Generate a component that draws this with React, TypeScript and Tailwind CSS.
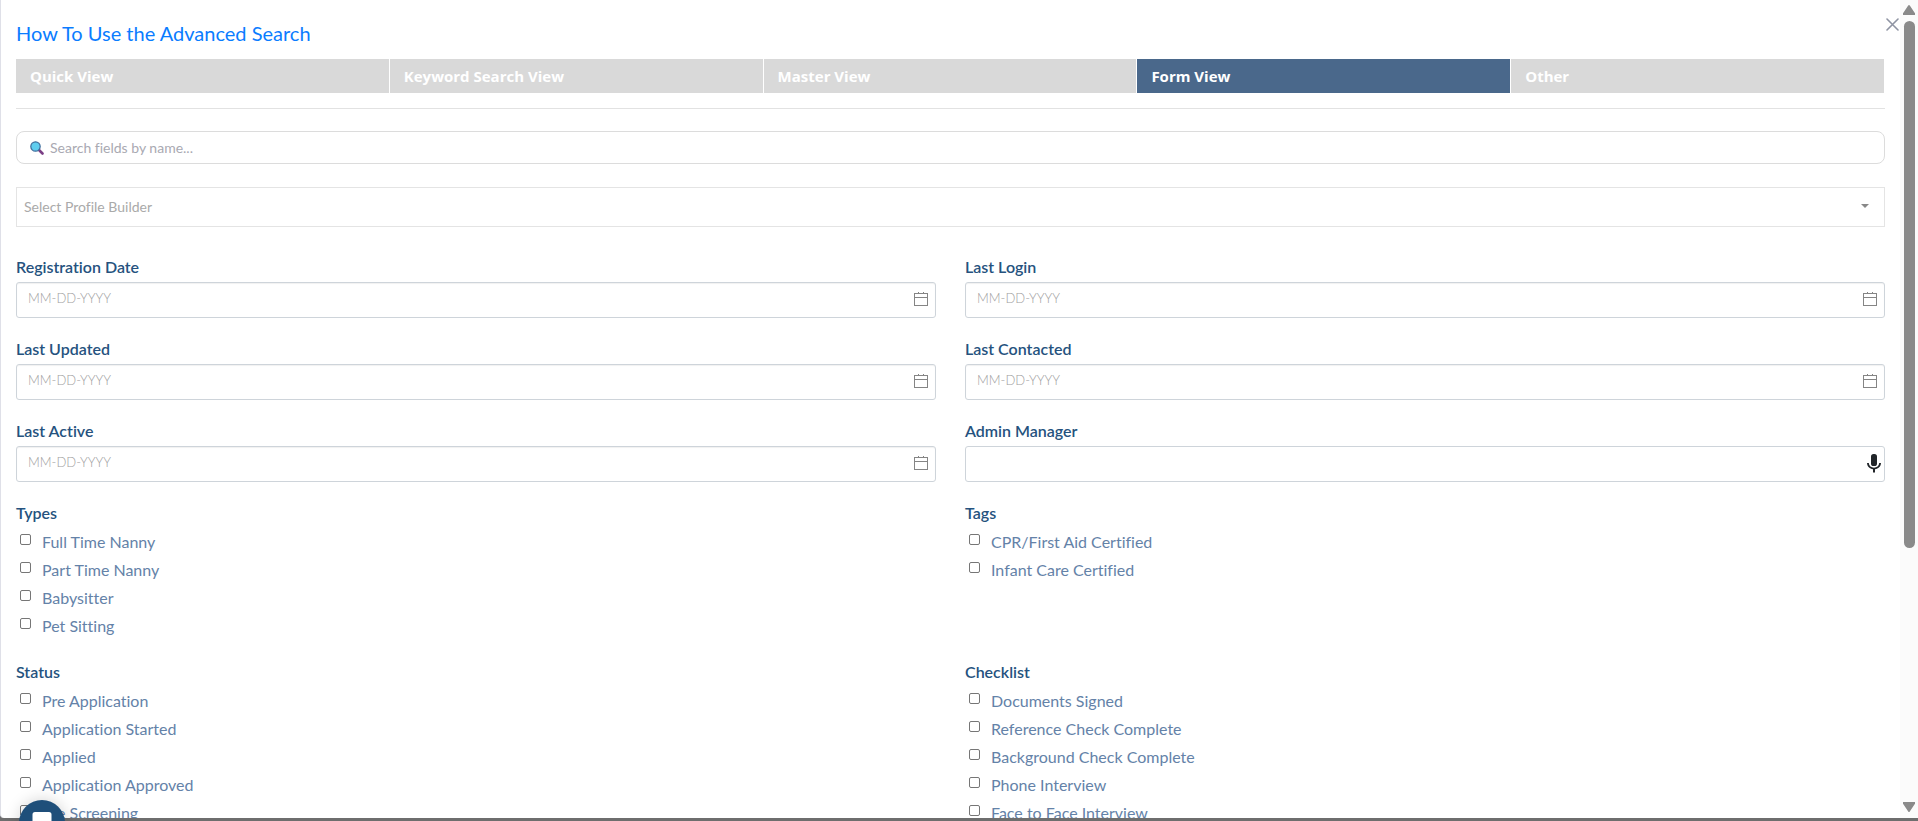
import React, { useState } from 'react';

const TABS = ['Quick View', 'Keyword Search View', 'Master View', 'Form View', 'Other'];

const DATE_FIELDS = ['Registration Date', 'Last Login', 'Last Updated', 'Last Contacted', 'Last Active'];

const GROUPS = [
  { title: 'Types', items: ['Full Time Nanny', 'Part Time Nanny', 'Babysitter', 'Pet Sitting'] },
  { title: 'Tags', items: ['CPR/First Aid Certified', 'Infant Care Certified'] },
  {
    title: 'Status',
    items: ['Pre Application', 'Application Started', 'Applied', 'Application Approved', 'Pre Screening'],
  },
  {
    title: 'Checklist',
    items: [
      'Documents Signed',
      'Reference Check Complete',
      'Background Check Complete',
      'Phone Interview',
      'Face to Face Interview',
    ],
  },
];

const toId = (name: string) => name.toLowerCase().replace(/[^a-z]+/g, '-');

const CalendarIcon = () => (
  <svg className="w-4 h-4" viewBox="0 0 16 16" fill="none" stroke="#858585" shapeRendering="crispEdges">
    <path d="M1.5 2.5h13v12h-13z" />
    <path d="M1.5 6.5h13" />
    <path d="M5.5 1v2M10.5 1v2" />
  </svg>
);

const MicIcon = () => (
  <svg className="w-6 h-6" viewBox="0 0 24 24" fill="#212529">
    <rect x="9" y="2" width="6" height="12" rx="2.6" />
    <path d="M5 11h1.8c.2 2.900 2.400 4.700 5.200 4.700s5-1.800 5.200-4.700H19c-.2 3.500-2.700 5.800-6 6.200V20.500h-2v-3.300c-3.300-.4-5.800-2.700-6-6.200z" />
  </svg>
);

const MagnifierIcon = () => (
  <svg className="w-[14px] h-[14px] shrink-0" viewBox="0 0 14 14">
    <path d="M8.500 8.500l4 4" stroke="#7b3f86" strokeWidth="2.600" strokeLinecap="round" />
    <circle cx="5.500" cy="5.500" r="4.700" fill="#5fcdee" stroke="#3f6d9c" strokeWidth="1.200" />
  </svg>
);

const DateField = ({ label }: { label: string }) => (
  <div>
    <label htmlFor={toId(label)} className="block text-[16px] leading-6 font-semibold text-[#25527e]">
      {label}
    </label>
    <div className="mt-[3px] flex h-9 items-center rounded-[3px] border border-[#ced4da] pb-[2px] pl-[11px] pr-[6px] shadow-[inset_0_1px_1px_rgba(0,0,0,0.06)]">
      <input
        id={toId(label)}
        type="text"
        placeholder="MM-DD-YYYY"
        className="min-w-0 flex-1 bg-transparent text-[13px] font-light outline-none placeholder:text-[#a0a0a0]"
      />
      <button type="button" aria-label={`Pick ${label}`}>
        <CalendarIcon />
      </button>
    </div>
  </div>
);

const CheckboxGroup = ({ title, items }: { title: string; items: string[] }) => (
  <fieldset className="pb-px">
    <legend className="mb-[3px] text-[16px] leading-6 font-semibold text-[#25527e]">{title}</legend>
    {items.map((item) => (
      <label key={item} className="flex h-7 items-start pl-1 text-[16px] leading-7 text-[#6482a8]">
        <input
          type="checkbox"
          className="mt-[6px] mr-[11px] h-[11px] w-[11px] shrink-0 appearance-none rounded-[2px] border border-[#767676] bg-white checked:bg-[#4a6789]"
        />
        {item}
      </label>
    ))}
  </fieldset>
);

const App: React.FC = () => {
  const [activeTab, setActiveTab] = useState('Form View');

  return (
    <div className="relative flex h-screen flex-col overflow-hidden bg-[#6e6e6e] pb-[3px] font-['Lato',sans-serif] [font-variant-ligatures:none]">
      <div className="flex min-h-0 flex-1 overflow-hidden rounded-bl-[4px] border-l border-[#dfe0e8] bg-white">
        <main className="min-w-0 flex-1 overflow-hidden pt-[19px] pr-[15px] pl-[15px]">
          <a href="#help" className="block w-fit text-[20px] leading-7 text-[#0a7cff]">
            How To Use the Advanced Search
          </a>

          <nav className="mt-3 mr-px grid grid-cols-5 gap-px">
            {TABS.map((tab) => (
              <button
                key={tab}
                type="button"
                onClick={() => setActiveTab(tab)}
                className={`h-[34px] px-[14px] text-left font-['Open_Sans',sans-serif] text-[15px] font-bold text-white ${
                  tab === activeTab ? 'bg-[#4a688b]' : 'bg-[#d9d9d9]'
                }`}
              >
                {tab}
              </button>
            ))}
          </nav>

          <hr className="mt-[15px] border-[#e2e2e2]" />

          <div className="mt-[22px] flex h-[33px] items-center gap-[6px] rounded-[8px] border border-[#dcdcdc] px-[13px]">
            <MagnifierIcon />
            <input
              type="text"
              aria-label="Search fields by name"
              placeholder="Search fields by name..."
              className="min-w-0 flex-1 bg-transparent text-[14px] outline-none placeholder:text-[#a9a9b2]"
            />
          </div>

          <div className="relative mt-[23px]">
            <select
              aria-label="Select Profile Builder"
              defaultValue=""
              className="h-10 w-full appearance-none border border-[#e4e4e4] bg-white px-[7px] pb-[2px] text-[14px] text-[#aaaaaa] outline-none"
            >
              <option value="">Select Profile Builder</option>
            </select>
            <svg className="pointer-events-none absolute top-[17px] right-4 h-1 w-2" viewBox="0 0 8 4" fill="#888888">
              <path d="M0 0h8L4 4z" />
            </svg>
          </div>

          <form className="mt-7 grid grid-cols-2 gap-x-[29px] gap-y-[19px]">
            {DATE_FIELDS.map((label) => (
              <DateField key={label} label={label} />
            ))}
            <div>
              <label htmlFor="admin-manager" className="block text-[16px] leading-6 font-semibold text-[#25527e]">
                Admin Manager
              </label>
              <div className="mt-[3px] flex h-9 items-center rounded-[3px] border border-[#ced4da] pl-[11px]">
                <input
                  id="admin-manager"
                  type="text"
                  className="min-w-0 flex-1 bg-transparent text-[13px] outline-none"
                />
                <button type="button" aria-label="Dictate" className="-mr-[2px]">
                  <MicIcon />
                </button>
              </div>
            </div>
            {GROUPS.map((group) => (
              <CheckboxGroup key={group.title} title={group.title} items={group.items} />
            ))}
          </form>
        </main>

        <div aria-hidden="true" className="flex w-[18px] shrink-0 flex-col items-center bg-[#fbfbfb] pt-[5px] pb-[6px]">
          <svg className="h-[10px] w-3 shrink-0" viewBox="0 0 12 10" fill="#8a8a8a">
            <path d="M5.200.600a1 1 0 0 1 1.600 0L11.800 8a1 1 0 0 1-.8 2H1A1 1 0 0 1 .2 8z" />
          </svg>
          <div className="mt-[6px] mb-[6px] w-[11px] flex-1">
            <div className="h-[68%] rounded-full bg-[#8a8a8a]" />
          </div>
          <svg className="h-[10px] w-3 shrink-0" viewBox="0 0 12 10" fill="#8a8a8a">
            <path d="M5.200 9.400a1 1 0 0 0 1.600 0L11.800 2A1 1 0 0 0 11 0H1A1 1 0 0 0 .2 2z" />
          </svg>
        </div>
      </div>

      <button type="button" aria-label="Close" className="absolute top-[18px] right-[19px]">
        <svg className="h-[13px] w-[13px]" viewBox="0 0 13 13" stroke="#8f94a3" strokeWidth="1.600" strokeLinecap="round">
          <path d="M1 1l11 11M12 1L1 12" />
        </svg>
      </button>

      <button
        type="button"
        aria-label="Open chat"
        className="absolute -bottom-[25px] left-[19px] flex h-[46px] w-[46px] justify-center rounded-full bg-[#1f4f7a] pt-3 shadow-[0_0_16px_rgba(0,0,0,0.18)]"
      >
        <svg className="h-5 w-5" viewBox="0 0 20 20" fill="#ffffff">
          <path d="M3 0h14a2.500 2.500 0 0 1 2.500 2.500V20l-4-3H3a2.500 2.500 0 0 1-2.500-2.500v-12A2.500 2.500 0 0 1 3 0z" />
        </svg>
      </button>
    </div>
  );
};

export default App;
